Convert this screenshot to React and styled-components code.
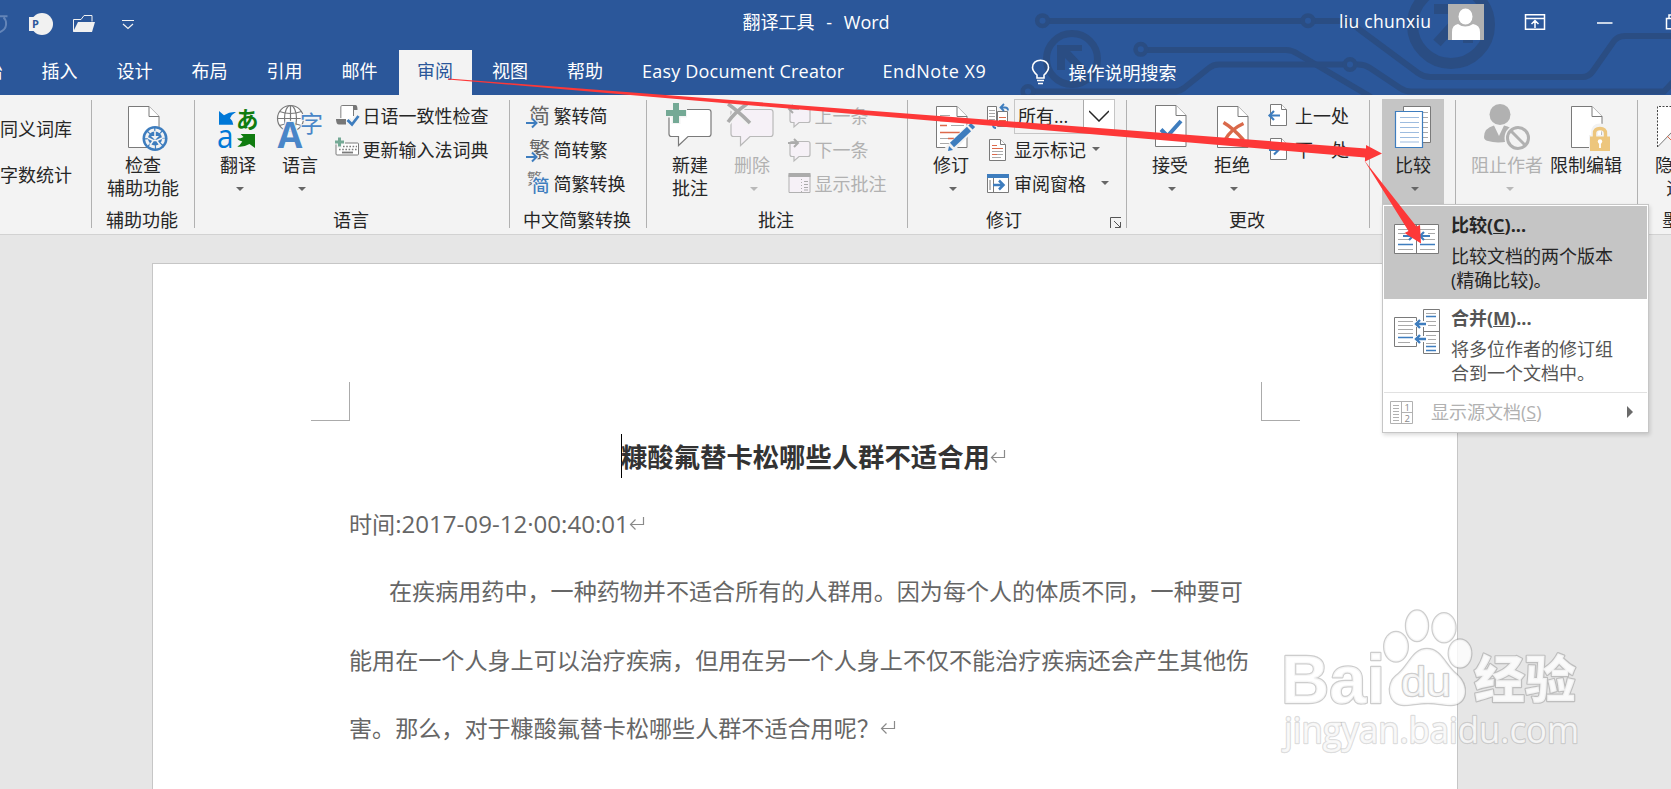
import React from 'react';
import styled, { createGlobalStyle } from 'styled-components';

const GlobalStyle = createGlobalStyle`
  * { box-sizing: border-box; }
  body {
    margin: 0;
    overflow: hidden;
    background: #e6e6e6;
    font-family: "Open Sans", "Noto Sans CJK SC", sans-serif;
    font-size: 18px;
    color: #262626;
  }
  svg { display: block; flex: none; }
`;

const Window = styled.div`
  position: relative;
  width: 1671px;
  height: 789px;
  overflow: hidden;
  display: flex;
  flex-direction: column;
`;

/* ---------- header ---------- */

const Header = styled.header`
  position: relative;
  flex: none;
  height: 95px;
  background: #2b579a;
  color: #fff;
`;

const Circuit = styled.svg`
  position: absolute;
  left: 1020px;
  top: 0;
`;

const TitleBar = styled.div`
  position: relative;
  display: flex;
  align-items: center;
  height: 45px;
  white-space: nowrap;
`;

const QuickAccess = styled.div`
  display: flex;
  align-items: center;
  width: 742.5px;
`;

const DocName = styled.div`
  width: 596.5px;
  line-height: 24px;
  margin-top: -1px;
  white-space: pre;
  word-spacing: 1.2px;
`;

const UserName = styled.div`
  width: 109px;
  font-size: 17.5px;
  line-height: 24px;
  letter-spacing: 0.3px;
  margin-top: -3px;
`;

const Tabs = styled.nav`
  position: relative;
  display: flex;
  height: 45px;
  margin: 5px 0 0 -53px;
`;

const Tab = styled.div`
  flex: none;
  width: ${p => p.$width || 75}px;
  padding: 0 ${p => (p.$active ? 18.5 : 19.5)}px;
  line-height: 43px;
  white-space: nowrap;
  letter-spacing: ${p => p.$spacing || 0}px;
  ${p => p.$active && 'width: 73px; margin: 0 1px 0 1.5px; background: #f3f3f3; color: #2b579a;'}
`;

const TellMe = styled.div`
  display: flex;
  align-items: center;
  gap: 19px;
  height: 43px;
  padding-left: 24px;
`;

/* ---------- ribbon ---------- */

const Ribbon = styled.section`
  flex: none;
  display: flex;
  height: 140px;
  padding-top: 5px;
  background: #f3f3f3;
  border-bottom: 1px solid #d2d2d2;
  white-space: nowrap;
`;

const Separator = styled.i`
  flex: none;
  width: 1px;
  height: 128px;
  background: #b1b1b1;
`;

const Group = styled.div`
  flex: none;
  width: ${p => p.$width}px;
  display: grid;
  grid-template-rows: 109px 24px;
`;

const GroupBody = styled.div`
  display: flex;
  min-width: 0;
  padding-left: ${p => p.$left || 0}px;
`;

const GroupLabel = styled.div`
  display: flex;
  justify-content: center;
  align-items: center;
  line-height: 23px;
  padding-right: ${p => p.$shift || 2}px;
  padding-bottom: 1px;
`;

const LauncherCell = styled.span`
  width: 0;
  margin: 5px 0 0;
  transform: translateX(88px);
`;

const Big = styled.div`
  flex: none;
  width: ${p => p.$width || 62}px;
  display: flex;
  flex-direction: column;
  align-items: center;
  line-height: 23px;
  color: ${p => (p.$disabled ? '#b1b1b1' : 'inherit')};
  ${p => p.$pressed && 'background: #c5c5c5; margin-top: -1px; padding-top: 1px;'}
`;

const BigIcon = styled.svg.attrs({ width: 62, height: 54, viewBox: '0 0 62 54', fill: 'none' })`
  overflow: visible;
`;

const Caret = styled.i`
  width: 0;
  height: 0;
  border: 4px solid transparent;
  border-top-color: ${p => (p.$disabled ? '#b9b9b9' : '#666')};
  border-bottom: 0;
  margin: ${p => p.$margin || '10px 0 0 4px'};
`;

const Rows = styled.div`
  flex: none;
  margin-top: -1px;
  margin-left: ${p => p.$left || 0}px;
`;

const Row = styled.div`
  display: flex;
  align-items: center;
  height: ${p => p.$height || 34}px;
  padding-bottom: 3px;
  gap: ${p => (p.$gap === undefined ? 3.5 : p.$gap)}px;
  color: ${p => (p.$disabled ? '#b1b1b1' : 'inherit')};
`;

const Combo = styled.div`
  display: flex;
  width: 101px;
  height: 35px;
  border: 1px solid #c6c6c6;
  line-height: 32px;
  padding-left: 3px;
  margin: 3px -100px 0 0;
`;

const ComboArrow = styled.div`
  display: flex;
  align-items: center;
  justify-content: center;
  width: 31px;
  margin-left: auto;
  background: #fff;
  border-left: 1px solid #ababab;
`;

const SmallIcon = styled.svg.attrs({ width: 24, height: 24, viewBox: '0 0 24 24', fill: 'none' })`
  overflow: visible;
  margin-top: 3px;
`;

/* ---------- compare menu ---------- */

const Menu = styled.div`
  position: absolute;
  left: 1382px;
  top: 204px;
  width: 267px;
  height: 229px;
  padding: 1px;
  background: #fff;
  border: 1px solid #c6c6c6;
  box-shadow: 1px 2px 4px rgba(0, 0, 0, 0.15);
`;

const MenuItem = styled.div`
  display: flex;
  height: 93px;
  padding: 8px 0 0 10px;
  gap: 11px;
  color: ${p => (p.$active ? '#262626' : '#555')};
  background: ${p => (p.$active ? '#c5c5c5' : '#fff')};
`;

const MenuTitle = styled.div`
  font-weight: 700;
  line-height: 24px;
  margin: -1px 0 7px;
`;

const MenuText = styled.div`
  line-height: 24px;
  white-space: nowrap;
`;

const MenuFooter = styled.div`
  display: flex;
  align-items: center;
  height: 39px;
  padding: 0 14px 0 6px;
  gap: 18px;
  border-top: 1px solid #e1e1e1;
  color: #b1b1b1;
  line-height: 24px;
`;

const SubmenuArrow = styled.i`
  margin-left: auto;
  border: 6px solid transparent;
  border-left-color: #6a6a6a;
  border-right: 0;
`;

/* ---------- document ---------- */

const Page = styled.main`
  flex: 1;
  width: 1306px;
  margin: 28px 0 0 152px;
  background: #fff;
  border: 1px solid #c6c6c6;
  border-bottom: 0;
  color: #666;
`;

const Marks = styled.div`
  display: flex;
  justify-content: space-between;
  padding: 118px 157px 0 158px;
`;

const Corner = styled.i`
  width: 39px;
  height: 39px;
  border-bottom: 1px solid #ababab;
  ${p => (p.$left ? 'border-right' : 'border-left')}: 1px solid #ababab;
`;

const Heading = styled.h1`
  display: flex;
  align-items: center;
  height: 69px;
  margin: 0;
  padding-left: 468px;
  font-size: 26.35px;
  font-weight: 700;
  color: #333;
`;

const Cursor = styled.i`
  width: 1px;
  height: 44px;
  margin: 0 -1px 0 0;
  background: #000;
`;

const Line = styled.p`
  display: flex;
  align-items: center;
  height: ${p => p.$height || 68.5}px;
  margin: 0;
  padding-left: ${p => p.$indent || 196}px;
  font-size: 23.08px;
  white-space: nowrap;
`;

const DateText = styled.span`
  font-size: 24.1px;
`;

const Overlay = styled.svg`
  position: absolute;
  left: 0;
  top: 0;
  pointer-events: none;
`;

const ReturnMark = styled.svg`
  margin-top: 2px;
`;

const GRAY = '#7a7a7a';
const BLUE = '#3e7dbe';

const PageShape = ({ x = 16.5, y = 6.5, w = 30.5, h = 41, fold = 10, stroke = GRAY }) => (
  <g stroke={stroke}>
    <path fill="#fff" d={`M${x} ${y}h${w - fold}l${fold} ${fold}v${h - fold}h${-w}z`} />
    <path fill="#fff" d={`M${x + w - fold} ${y}v${fold}h${fold}`} />
  </g>
);

const Return = () => (
  <ReturnMark width="16" height="16" viewBox="0 0 16 16" fill="none" stroke="#8a8a8a" strokeWidth="1.2">
    <path d="M14.5 1v7.5H1.5M6.5 3.5L1.5 8.5l5 5" />
  </ReturnMark>
);

const CircuitArt = () => (
  <Circuit width="651" height="95" viewBox="1020 0 651 95" fill="none" stroke="#2a4d83" strokeWidth="6">
    <path d="M1048 21H1302M1314 21H1340Q1352 22 1360 30L1418 73Q1424 77 1430 77H1582Q1589 77 1593 71L1614 41Q1618 36 1625 36H1671" />
    <path d="M1147 50H1286Q1292 50 1298 54L1371 97" />
    <path d="M1034 91.5H1176Q1180 91 1184 88L1209 68Q1213 64.5 1219 64.5H1343M1357 64.5Q1364 64 1370 68L1400 88Q1405 91.5 1411 91.5H1664L1673 82" />
    <g strokeWidth="4.5">
      <circle cx="1042.5" cy="20.7" r="5.3" />
      <circle cx="1308" cy="20.7" r="5.3" />
      <circle cx="1140.8" cy="49.3" r="5.3" />
      <circle cx="1350" cy="64.5" r="5.3" />
      <circle cx="1028" cy="91.5" r="5.3" />
    </g>
    <circle cx="1072" cy="59" r="25.5" strokeWidth="7" />
    <path d="M1057 45h25v6h-12l16 17v7l-5-1-16-16v12h-8z" fill="#2a4d83" stroke="none" />
    <circle cx="1451" cy="25" r="38.5" strokeWidth="11" />
    <path d="M1434 9H1468V43M1437 43L1466 11" strokeWidth="10" />
  </Circuit>
);

const TitleBarView = () => (
  <TitleBar>
    <QuickAccess>
      <svg width="140" height="45" viewBox="0 0 140 45" fill="none">
        <path d="M0 16.2h7.5M3.5 17.500Q6.500 20 6 25T-1 32.500" stroke="#6485b8" strokeWidth="2" />
        <circle cx="42" cy="24" r="11" fill="#f1f1f1" />
        <path d="M29 17h15v14H29z" fill="#f1f1f1" />
        <text x="32" y="28" fontSize="11" fontWeight="700" fill="#2b579a">P</text>
        <path d="M73.5 31.5V19.5H81l3-4h8v6" stroke="#f1f1f1" />
        <path d="M78 22h17l-3 10H73z" fill="#f1f1f1" />
        <path d="M122 20.500h12M123 24l5 4.500 5-4.500" stroke="#f1f1f1" strokeWidth="1.2" />
      </svg>
    </QuickAccess>
    <DocName>翻译工具  -  Word</DocName>
    <UserName>liu chunxiu</UserName>
    <svg width="223" height="45" viewBox="1448 0 223 45" fill="none">
      <path d="M1448 4h36v36h-36z" fill="#b1b1b1" />
      <ellipse cx="1465.5" cy="16.5" rx="7" ry="8" fill="#fff" />
      <path d="M1452 40V32q0-7 6-8 7 5 15 0 7 1 7 8v8z" fill="#fff" />
      <g stroke="#fff" strokeWidth="1.5">
        <path d="M1525.5 14.8h19v14.4h-19zM1525.5 18.5h19M1535 28v-7M1531.5 24l3.5-3.5 3.5 3.5" />
        <path d="M1597 23h15.5" />
        <path d="M1672 18.5h-5.5v10.3h6M1669 18v-3h4" />
      </g>
    </svg>
  </TitleBar>
);

const TabsView = () => (
  <Tabs>
    {['开始', '插入', '设计', '布局', '引用', '邮件', '审阅', '视图', '帮助'].map(name => (
      <Tab key={name} $active={name === '审阅'}>{name}</Tab>
    ))}
    <Tab $width={240.5} $spacing={0.2}>Easy Document Creator</Tab>
    <Tab $width={143.5} $spacing={0.55}>EndNote X9</Tab>
    <TellMe>
      <svg width="19" height="26" viewBox="0 0 19 26" fill="none" stroke="#fff" strokeWidth="1.6">
        <path d="M6 19v-3Q1.5 12 1.5 8.5C1.5 4 5 1.2 9.5 1.2S17.5 4 17.5 8.5Q17.5 12 13 16v3zM6 21.5h7M7 24.5h5" />
      </svg>
      操作说明搜索
    </TellMe>
  </Tabs>
);

/* ---------- big icons ---------- */

const CheckIcon = () => (
  <BigIcon>
    <PageShape />
    <circle cx="43" cy="38.5" r="12.5" fill={BLUE} />
    <circle cx="43" cy="38.5" r="8.500" stroke="#f3f3f3" strokeWidth="3" strokeDasharray="5.500 1.200" />
    <path d="M39 36l4 4 4-4" fill="#f3f3f3" />
    <path d="M43 31v8M36 38l5 2.500h4l5-2.500M41 41l-3 4M45 41l3 4" stroke="#f3f3f3" strokeWidth="1.6" />
  </BigIcon>
);

const TranslateIcon = () => (
  <BigIcon>
    <path d="M12 11l5 4.300q6-4 12-3.300q-4 2-6 6.300 3 2.500 3.300 6.400H12z" fill="#0078d7" />
    <path d="M48 34v14l-5.500-4q-6 3.500-12.200 2.500 3-1.500 5-5-4-1-5.300-3 4 0 6.500-1.500L33.600 34z" fill="#107c10" />
    <text x="10" y="47.5" fontSize="32" fontFamily="Open Sans" fill="#0078d7" textLength="16.500" lengthAdjust="spacingAndGlyphs">a</text>
    <text x="29" y="27.5" fontSize="22.5" fontWeight="700" fontFamily="Noto Sans CJK JP" fill="#107c10">あ</text>
  </BigIcon>
);

const LanguageIcon = () => (
  <BigIcon>
    <g stroke={GRAY} strokeWidth="1.2">
      <circle cx="21.5" cy="18.5" r="13" fill="#fff" />
      <ellipse cx="21.5" cy="18.5" rx="6" ry="13" />
      <path d="M8.5 18.5h26M21.5 5.5v26M10.5 11.5q11 4 22 0M10.5 25.5q11-4 22 0" />
    </g>
    <text x="31" y="31.5" fontSize="23" fill="#4a86c8" stroke="#f3f3f3" strokeWidth="2" paintOrder="stroke">字</text>
    <text x="8.500" y="48" fontSize="36" fontWeight="700" fontFamily="Open Sans" fill="#4a86c8" stroke="#f3f3f3" strokeWidth="2.5" paintOrder="stroke">A</text>
  </BigIcon>
);

const bubble = 'M12.5 9.5h37q2.5 0 2.5 2.5v22q0 2.5-2.5 2.5H29L19.5 45.5V36.5h-7q-2.5 0-2.5-2.5V12q0-2.5 2.5-2.5z';

const NewCommentIcon = () => (
  <BigIcon>
    <path d={bubble} fill="#fff" stroke={GRAY} strokeWidth="1.2" />
    <path d="M17 2v22M6 13h22" stroke="#f3f3f3" strokeWidth="9" />
    <path d="M17 3v20M7 13h20" stroke="#74a995" strokeWidth="6" />
  </BigIcon>
);

const DeleteIcon = () => (
  <BigIcon>
    <path d={bubble} fill="#f6f1f7" stroke="#b9b9b9" strokeWidth="1.2" />
    <path d="M7 4L29 24M27 3Q14 12 7 23" stroke="#f3f3f3" strokeWidth="6" />
    <path d="M7 4Q16 10 29 23M26 4Q14 12 7 22" stroke="#ababab" strokeWidth="3.5" />
  </BigIcon>
);

const TrackIcon = () => (
  <BigIcon>
    <PageShape />
    <path d="M20 20.5h11M37 20.5h7M20 25.5h7M20 32.5h20M28 38.5h6" stroke="#dd6a4c" strokeWidth="1.4" />
    <path d="M20 15.5h10M31 25.5h13M20 38.5h8M20 43.5h12" stroke="#a9a9a9" />
    <path d="M27.5 51.5L52 26" stroke="#f3f3f3" strokeWidth="9" />
    <path d="M32 45L49 29" stroke={BLUE} strokeWidth="6" />
    <path d="M50.5 27.5l2.5-2.5" stroke={BLUE} strokeWidth="6" />
    <path d="M28 51l1-5 4 4z" fill={BLUE} />
  </BigIcon>
);

const AcceptIcon = () => (
  <BigIcon>
    <PageShape y={5.5} />
    <path d="M22 29.5l6.5 6.5L42 21" stroke={BLUE} strokeWidth="4" />
  </BigIcon>
);

const RejectIcon = () => (
  <BigIcon>
    <PageShape />
    <path d="M22.5 22.5Q32 28 42.5 40M42.5 23.5Q30 29 24 40" stroke="#d9694a" strokeWidth="3.5" />
  </BigIcon>
);

const CompareIcon = () => (
  <BigIcon>
    <path d="M21.5 6.5h27v36h-27z" fill="#fff" stroke={GRAY} />
    <path d="M41 12.5h5M41 17.5h5M41 22.5h5M41 27.5h5M41 32.5h5M41 37.5h5" stroke="#a9a9a9" />
    <path d="M13.5 11.5h27v36h-27z" fill="#fff" stroke={BLUE} strokeWidth="1.2" />
    <path d="M18 17.5h19M18 22.5h19M18 27.5h19M18 32.5h19M18 37.5h19M18 42h19" stroke="#9dbcdf" strokeWidth="1.2" />
  </BigIcon>
);

const BlockIcon = () => (
  <BigIcon>
    <circle cx="24" cy="14.5" r="10.5" fill="#b1b1b1" />
    <path d="M8 37q0-9 10-11.500l5 10.500 5-10.500q8 1 10 8l-6 8q-12 2-20-.500-4-1-4-4z" fill="#b1b1b1" />
    <circle cx="42" cy="38" r="11" fill="#f3f3f3" stroke="#f3f3f3" strokeWidth="5" />
    <circle cx="42" cy="38" r="10.5" stroke="#b1b1b1" strokeWidth="3" />
    <path d="M34.5 30.5l15 15" stroke="#b1b1b1" strokeWidth="3" />
  </BigIcon>
);

const LockIcon = () => (
  <BigIcon>
    <PageShape />
    <path d="M34 35h22v17H34z" fill="#f3f3f3" />
    <path d="M39.500 38v-5q0-6 5.500-6t5.500 6v5" stroke="#f3f3f3" strokeWidth="7" />
    <path d="M39.500 38v-4.500q0-5 5.500-5t5.500 5V38" stroke="#edc67d" strokeWidth="3.4" />
    <path d="M35 36.500h20v14.500H35z" fill="#edc67d" />
    <circle cx="45" cy="41.5" r="2.2" fill="#fff" />
    <path d="M45 42v6" stroke="#fff" strokeWidth="1.8" />
  </BigIcon>
);

const InkIcon = () => (
  <BigIcon>
    <path d="M7 6.5h38v25H20L7 46z" fill="#fff" />
    <path d="M6.5 47L22 31" stroke={GRAY} />
    <path d="M6.5 47V6.5H45" stroke="#444" strokeDasharray="2 1.5" />
    <path d="M16 36l6 6" stroke="#dd6a4c" />
  </BigIcon>
);

/* ---------- small icons ---------- */

const JapaneseIcon = () => (
  <SmallIcon>
    <path d="M6 14V3.5Q6 1.5 8 1.5h12" stroke={GRAY} strokeWidth="1.2" />
    <path d="M6.5 2h12v17h-8l-4-4z" fill="#fff" />
    <path d="M18 1h2.500q2 0 2 5H18zM1 15h10v5.500H4q-3 0-3-5.500z" fill="#777" />
    <path d="M18.5 5v7" stroke={GRAY} />
    <path d="M13 15.5l4 5L24 11" stroke="#f3f3f3" strokeWidth="6" />
    <path d="M12.5 16l4.5 4.5L23.5 12" stroke={BLUE} strokeWidth="2.8" />
  </SmallIcon>
);

const KeyboardIcon = () => (
  <SmallIcon>
    <rect x="1" y="5" width="22.5" height="12" rx="1" fill="#fff" stroke={GRAY} />
    <path d="M8 8.5h14M4 11.5h18" stroke={GRAY} strokeWidth="1.6" strokeDasharray="1.6 1.6" />
    <path d="M7 14.5h11" stroke={GRAY} strokeWidth="1.8" />
    <path d="M4.5-1v11M-1 4h11" stroke="#f3f3f3" strokeWidth="5" />
    <path d="M4.5-.5v9M0 4h9" stroke="#74a995" strokeWidth="3" />
  </SmallIcon>
);

const ConvertIcon = ({ children }) => (
  <SmallIcon>
    <text x="3" y="19" fontSize="21" fill="#666">{children}</text>
    <path d="M0 19h10M6 14.5l4.5 4.5-4.5 4.5" stroke="#f3f3f3" strokeWidth="4" />
    <path d="M0 19h10M6 14.5l4.5 4.5-4.5 4.5" stroke={BLUE} strokeWidth="2" />
  </SmallIcon>
);

const BothIcon = () => (
  <SmallIcon>
    <text x="1" y="12" fontSize="15" fill="#777">繁</text>
    <text x="6" y="20" fontSize="17.5" fontWeight="500" fill={BLUE} stroke="#f3f3f3" strokeWidth="3" paintOrder="stroke">简</text>
  </SmallIcon>
);

const NavBubble = ({ next }) => (
  <SmallIcon>
    <path d="M5 3.5h16q2 0 2 2v11q0 2-2 2H12L7 23v-4.500H5q-2 0-2-2v-11q0-2 2-2z" fill="#f6f1f7" stroke="#b9b9b9" strokeWidth="1.2" />
    <path d={next ? 'M1 5h10M7 1l4 4-4 4' : 'M2 5h10M6 1L2 5l4 4'} stroke="#ababab" strokeWidth="2" />
  </SmallIcon>
);

const PanelIcon = () => (
  <SmallIcon>
    <path d="M2 2.5h21v18H2z" fill="#f6f1f7" stroke="#b1b1b1" />
    <path d="M1.5 1h22v4h-22z" fill="#ababab" />
    <path d="M14.5 7v13" stroke="#b1b1b1" strokeDasharray="1 2" />
    <path d="M17 9.5h4M17 12.5h4M17 15.5h4M17 18h4" stroke="#ababab" />
  </SmallIcon>
);

const MarkupModeIcon = () => (
  <SmallIcon>
    <path d="M1.5 2.5h9v16h-9zM11.5 7.500h10v15h-10z" fill="#fff" stroke={GRAY} />
    <path d="M3 6.5h6M3 9.5h6M3 12.5h6M3 15.5h6" stroke="#a9a9a9" />
    <path d="M13 13.5h7M13 16.5h7M13 19.500h7" stroke="#dd6a4c" />
    <path d="M15 3.500h4q3 0 3 3M18 0L14.500 3.500 18 7" stroke={BLUE} strokeWidth="1.8" />
    <path d="M7 21q0 3 3 3" stroke={BLUE} strokeWidth="1.8" />
  </SmallIcon>
);

const MarkupIcon = () => (
  <SmallIcon>
    <PageShape x={3.5} y={1.5} w={16} h={21} fold={5} />
    <path d="M6 7.5h5M6 10.5h11M6 16.5h5" stroke="#dd6a4c" strokeWidth="1.2" />
    <path d="M6 13.5h11M11 16.5h6M6 19.5h9" stroke="#a9a9a9" />
  </SmallIcon>
);

const PaneIcon = () => (
  <SmallIcon>
    <path d="M1.5 3h21v17.500h-21z" fill="#fff" stroke={GRAY} />
    <path d="M1 2h22v4H1z" fill={BLUE} />
    <path d="M4 8v10M7.5 6v14" stroke={GRAY} />
    <path d="M7 13h10M13 8.5l4.5 4.5-4.5 4.5" stroke={BLUE} strokeWidth="2.5" />
  </SmallIcon>
);

const ChangeIcon = ({ next }) => (
  <SmallIcon>
    <PageShape x={1.5} y={0.5} w={16} h={21} fold={5} />
    <path d={next ? 'M0 12h9M5 7.5l4.5 4.5L5 16.5' : 'M1 11.5h10M5 7L.5 11.5 5 16'} stroke={BLUE} strokeWidth="2.2" />
  </SmallIcon>
);

const RibbonView = () => (
  <Ribbon>
    <Group $width={91}>
      <GroupBody>
        <Rows>
          <Row $height={61}>同义词库</Row>
          <Row $height={31}>字数统计</Row>
        </Rows>
      </GroupBody>
    </Group>
    <Separator />
    <Group $width={102}>
      <GroupBody $left={15}>
        <Big $width={72}><CheckIcon />检查<span>辅助功能</span></Big>
      </GroupBody>
      <GroupLabel>辅助功能</GroupLabel>
    </Group>
    <Separator />
    <Group $width={314}>
      <GroupBody $left={12}>
        <Big><TranslateIcon />翻译<Caret /></Big>
        <Big><LanguageIcon />语言<Caret /></Big>
        <Rows $left={4}>
          <Row><JapaneseIcon />日语一致性检查</Row>
          <Row><KeyboardIcon />更新输入法词典</Row>
        </Rows>
      </GroupBody>
      <GroupLabel>语言</GroupLabel>
    </Group>
    <Separator />
    <Group $width={136}>
      <GroupBody $left={16}>
        <Rows>
          <Row><ConvertIcon>简</ConvertIcon>繁转简</Row>
          <Row><ConvertIcon>繁</ConvertIcon>简转繁</Row>
          <Row><BothIcon />简繁转换</Row>
        </Rows>
      </GroupBody>
      <GroupLabel>中文简繁转换</GroupLabel>
    </Group>
    <Separator />
    <Group $width={260}>
      <GroupBody $left={12}>
        <Big><NewCommentIcon />新建<span>批注</span></Big>
        <Big $disabled><DeleteIcon />删除<Caret $disabled /></Big>
        <Rows $left={4}>
          <Row $disabled><NavBubble />上一条</Row>
          <Row $disabled><NavBubble next />下一条</Row>
          <Row $disabled><PanelIcon />显示批注</Row>
        </Rows>
      </GroupBody>
      <GroupLabel>批注</GroupLabel>
    </Group>
    <Separator />
    <Group $width={218}>
      <GroupBody $left={12}>
        <Big><TrackIcon />修订<Caret /></Big>
        <Rows $left={4}>
          <Row $gap={4}>
            <MarkupModeIcon />
            <Combo>
              所有...
              <ComboArrow>
                <svg width="20" height="12" viewBox="0 0 20 12" fill="none" stroke="#262626" strokeWidth="1.5"><path d="M0 1l10 10L20 1" /></svg>
              </ComboArrow>
            </Combo>
          </Row>
          <Row $gap={4}><MarkupIcon />显示标记<Caret $margin="0 0 0 2px" /></Row>
          <Row $gap={4}><PaneIcon />审阅窗格<Caret $margin="0 0 0 11px" /></Row>
        </Rows>
      </GroupBody>
      <GroupLabel $shift={26}>
        修订
        <LauncherCell>
          <svg width="12" height="12" viewBox="0 0 12 12" fill="none" stroke="#555">
            <path d="M.5 11V.5H11M4 4l6 6M10.5 5v5.500H5" />
          </svg>
        </LauncherCell>
      </GroupLabel>
    </Group>
    <Separator />
    <Group $width={242}>
      <GroupBody $left={12}>
        <Big><AcceptIcon />接受<Caret /></Big>
        <Big><RejectIcon />拒绝<Caret /></Big>
        <Rows $left={6}>
          <Row $gap={2}><ChangeIcon />上一处</Row>
          <Row $gap={2}><ChangeIcon next />下一处</Row>
        </Rows>
      </GroupBody>
      <GroupLabel>更改</GroupLabel>
    </Group>
    <Separator />
    <Group $width={85}>
      <GroupBody $left={12}>
        <Big $pressed><CompareIcon />比较<Caret /></Big>
      </GroupBody>
    </Group>
    <Separator />
    <Group $width={181}>
      <GroupBody $left={11}>
        <Big $width={80} $disabled><BlockIcon />阻止作者<Caret $disabled $margin="10px 0 0 6px" /></Big>
        <Big $width={78}><LockIcon />限制编辑</Big>
      </GroupBody>
    </Group>
    <Separator />
    <Group $width={86}>
      <GroupBody $left={13}>
        <Big><InkIcon />隐藏墨<span>迹 ▾</span></Big>
      </GroupBody>
      <GroupLabel>墨迹</GroupLabel>
    </Group>
  </Ribbon>
);

const MenuCompareIcon = () => (
  <svg width="46" height="40" viewBox="0 -10 46 40" fill="none">
    <path d="M.5 .5h44v29H.5zM22.5 .5v29" fill="#fff" stroke={GRAY} />
    <path d="M4 5.5h15M4 9.5h7M4 15.5h12M4 25.5h15M26 5.5h15M34 9.5h7M30 15.5h11M26 25.5h15" stroke="#a9a9a9" />
    <path d="M4 20.5h15M26 20.5h15" stroke={BLUE} strokeWidth="1.4" />
    <path d="M9 12h10M15 8l4 4-4 4M36 12H26M30 8l-4 4 4 4" stroke={BLUE} strokeWidth="2.2" />
  </svg>
);

const MenuMergeIcon = () => (
  <svg width="46" height="48" viewBox="0 -2 46 48" fill="none">
    <path d="M.5 8.5h22v29H.5zM29.5 .5h16v44h-16zM29.5 22.5h16" fill="#fff" stroke={GRAY} />
    <path d="M4 12.5h15M4 16.5h15M4 20.5h15M4 24.5h15M4 33.5h12M32 4.5h10M32 12.5h10M34 16.5h8M32 26.5h10M34 30.5h8M32 34.5h10" stroke="#a9a9a9" />
    <path d="M4 28.5h15M32 7.5h10M32 37.5h10M32 41.5h10" stroke={BLUE} strokeWidth="1.4" />
    <path d="M21 15h11M21 30h11" stroke="#fff" strokeWidth="6" />
    <path d="M32 15H22M26 11l-4 4 4 4M32 30H22M26 26l-4 4 4 4" stroke={BLUE} strokeWidth="2.4" />
  </svg>
);

const MenuView = () => (
  <Menu>
    <MenuItem $active>
      <MenuCompareIcon />
      <div>
        <MenuTitle>比较(<u>C</u>)...</MenuTitle>
        <MenuText>比较文档的两个版本<br />(精确比较)。</MenuText>
      </div>
    </MenuItem>
    <MenuItem>
      <MenuMergeIcon />
      <div>
        <MenuTitle>合并(<u>M</u>)...</MenuTitle>
        <MenuText>将多位作者的修订组<br />合到一个文档中。</MenuText>
      </div>
    </MenuItem>
    <MenuFooter>
      <svg width="23" height="23" viewBox="0 0 23 23" fill="none" stroke="#b1b1b1">
        <path d="M.5 .5h22v22H.5zM11.5 .5v22M11.5 11.5h11M3 4.5h6M3 7.5h6M3 10.5h6M3 13.5h6M3 16.5h6M3 19.5h6" />
        <g fill="#8a8a8a" stroke="none" fontSize="9.5">
          <text x="14.5" y="9.5">1</text>
          <text x="14.5" y="20.5">2</text>
        </g>
      </svg>
      <span>显示源文档(<u>S</u>)</span>
      <SubmenuArrow />
    </MenuFooter>
  </Menu>
);

const Watermark = () => (
  <g fill="#fff" fillOpacity="0.8" stroke="#888" strokeOpacity="0.42" strokeWidth="2.4" strokeLinejoin="round" paintOrder="stroke" fontWeight="700">
    <text x="1281" y="703" fontSize="69" fontFamily="Liberation Sans" textLength="104" lengthAdjust="spacingAndGlyphs">Bai</text>
    <ellipse cx="1396" cy="646.7" rx="11.8" ry="14.8" />
    <ellipse cx="1417" cy="625.7" rx="11" ry="15.3" />
    <ellipse cx="1444" cy="627.7" rx="11.5" ry="14.5" />
    <ellipse cx="1460" cy="653.5" rx="11.3" ry="14" />
    <path d="M1427 649C1441 649 1445 665 1456 674C1470 686 1467 705 1451 705C1442 705 1438 703 1428 703C1418 703 1412 705 1404 705C1388 705 1386 684 1396 676C1409 667 1412 649 1427 649Z" />
    <text x="1401" y="696" fontSize="41" fontWeight="400" fontFamily="Liberation Sans" textLength="50" lengthAdjust="spacingAndGlyphs">du</text>
    <text x="1474" y="698" fontSize="51" fontWeight="900" textLength="102" lengthAdjust="spacingAndGlyphs">经验</text>
    <text x="1284" y="743" fontSize="36" fontWeight="400" fontFamily="Open Sans" strokeOpacity="0.3" textLength="295" lengthAdjust="spacingAndGlyphs">jingyan.baidu.com</text>
  </g>
);

export default function App() {
  return (
    <Window>
      <GlobalStyle />
      <Header>
        <CircuitArt />
        <TitleBarView />
        <TabsView />
      </Header>
      <RibbonView />
      <Page>
        <Marks><Corner $left /><Corner /></Marks>
        <Heading><Cursor />糠酸氟替卡松哪些人群不适合用<Return /></Heading>
        <Line $height={66}><span>时间</span><DateText>:2017-09-12·00:40:01</DateText><Return /></Line>
        <Line $indent={236}>在疾病用药中，一种药物并不适合所有的人群用。因为每个人的体质不同，一种要可</Line>
        <Line>能用在一个人身上可以治疗疾病，但用在另一个人身上不仅不能治疗疾病还会产生其他伤</Line>
        <Line>害。那么，对于糠酸氟替卡松哪些人群不适合用呢？<Return /></Line>
      </Page>
      <MenuView />
      <Overlay width="1671" height="789" viewBox="0 0 1671 789">
        <Watermark />
        <g fill="#fd3838">
          <path d="M448 78.500L1366 148.500V145L1382 153.500L1365 161.500V157.500L448 79.500Z" />
          <path d="M1364 160L1416.5 226.5L1420 225L1421 243.5L1404.5 233L1408.5 231Z" />
        </g>
      </Overlay>
    </Window>
  );
}
